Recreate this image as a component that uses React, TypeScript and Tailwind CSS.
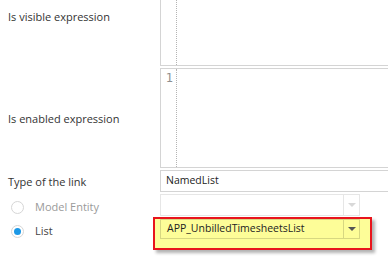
import React from "react";

function Editor({ lineNo, className }: { lineNo?: string; className: string }) {
  return (
    <div className={`flex-1 flex border-[#d4d4d4] bg-white ${className}`}>
      <div className="w-[16px] shrink-0 border-r border-dotted border-[#b4b4b4] text-right pr-[3px] pt-[1px] text-[12px] leading-[16px] text-[#8f8f8f] font-['DejaVu_Sans_Mono',monospace]">
        {lineNo}
      </div>
      <div className="flex-1" />
    </div>
  );
}

function Dropdown({ text, dark, className }: { text?: string; dark?: boolean; className: string }) {
  return (
    <div className={`flex w-[200px] border ${className}`}>
      <div className="flex-1 flex items-center pl-[6px] text-[10.5px] text-[#222]">{text}</div>
      <div className={`w-[16px] flex items-center justify-center border-l ${dark ? "border-black/15" : "border-[#e6e6e6]"}`}>
        <div
          className={`w-0 h-0 border-l-[4px] border-r-[4px] border-t-[4px] border-l-transparent border-r-transparent ${dark ? "border-t-[#555]" : "border-t-[#d8d8d8]"}`}
        />
      </div>
    </div>
  );
}

export default function App() {
  return (
    <div className="w-[388px] h-[257px] overflow-hidden bg-white font-['Open_Sans',sans-serif] text-[11px] text-[#333]">
      <div className="flex h-[66px] -mr-[10px]">
        <div className="w-[160px] shrink-0 pl-2 pt-[9px] leading-[16px]">Is visible expression</div>
        <Editor className="border-l border-b" />
      </div>
      <div className="flex h-[100px] mt-[2px] -mr-[10px]">
        <div className="w-[160px] shrink-0 pl-2 flex items-center pt-[3px]">Is enabled expression</div>
        <Editor lineNo="1" className="border-l border-t border-b" />
      </div>
      <div className="flex h-[22px] mt-[2px] items-center -mr-[10px]">
        <div className="w-[160px] shrink-0 pl-2 pt-[2px]">Type of the link</div>
        <div className="flex-1 h-full border border-[#d4d4d4] flex items-center pl-[5px] text-[10.5px] text-[#222]">
          NamedList
        </div>
      </div>
      <div className="flex h-[22px] mt-[2px] items-center">
        <div className="w-[160px] shrink-0 pl-[11px] flex items-center gap-[11px] pt-[4px]">
          <div className="w-[13px] h-[13px] rounded-full border border-[#d6d6d6] bg-white" />
          <span className="text-[#9a9a9a]">Model Entity</span>
        </div>
        <Dropdown className="h-full border-[#e6e6e6]" />
      </div>
      <div className="flex mt-[1px]">
        <div className="w-[160px] shrink-0 pl-[11px] flex items-center gap-[11px] h-[24px] pt-[4px]">
          <div className="w-[13px] h-[13px] rounded-full border border-[#d6d6d6] bg-white flex items-center justify-center">
            <div className="w-[7px] h-[7px] rounded-full bg-[#1c98e6]" />
          </div>
          <span className="text-[#444]">List</span>
        </div>
        <div className="-ml-[7px] w-[219px] h-[33px] border-2 border-[#e8141c] bg-[#fdfd98] pl-[5px] shadow-[3px_3px_3px_rgba(0,0,0,0.3)]">
          <Dropdown text="APP_UnbilledTimesheetsList" dark className="h-[20px] border-black/15" />
        </div>
      </div>
    </div>
  );
}
